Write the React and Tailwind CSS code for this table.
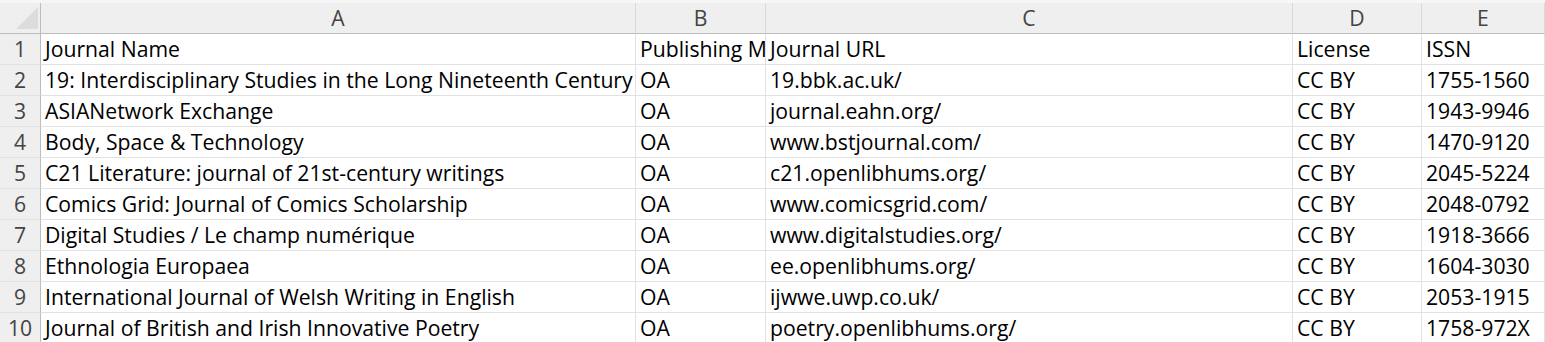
const COLS = ['A', 'B', 'C', 'D', 'E']

const ROWS = [
  ['Journal Name', 'Publishing Model', 'Journal URL', 'License', 'ISSN'],
  ['19: Interdisciplinary Studies in the Long Nineteenth Century', 'OA', '19.bbk.ac.uk/', 'CC BY', '1755-1560'],
  ['ASIANetwork Exchange', 'OA', 'journal.eahn.org/', 'CC BY', '1943-9946'],
  ['Body, Space & Technology', 'OA', 'www.bstjournal.com/', 'CC BY', '1470-9120'],
  ['C21 Literature: journal of 21st-century writings', 'OA', 'c21.openlibhums.org/', 'CC BY', '2045-5224'],
  ['Comics Grid: Journal of Comics Scholarship', 'OA', 'www.comicsgrid.com/', 'CC BY', '2048-0792'],
  ['Digital Studies / Le champ numérique', 'OA', 'www.digitalstudies.org/', 'CC BY', '1918-3666'],
  ['Ethnologia Europaea', 'OA', 'ee.openlibhums.org/', 'CC BY', '1604-3030'],
  ['International Journal of Welsh Writing in English', 'OA', 'ijwwe.uwp.co.uk/', 'CC BY', '2053-1915'],
  ['Journal of British and Irish Innovative Poetry', 'OA', 'poetry.openlibhums.org/', 'CC BY', '1758-972X'],
]

const GRID = 'grid grid-cols-[41px_595px_130px_527px_129px_1fr]'

export default function App() {
  return (
    <div className="h-[342px] w-[1545px] overflow-hidden bg-white font-['Open_Sans',sans-serif] text-[21.2px] leading-[30px] text-black">
      {/* column letters */}
      <div className={`${GRID} h-[34px] border-t-[3px] border-[#f6f6f6] bg-[#efefef]`}>
        <div className="relative border-b border-r border-b-[#bcbcbc] border-r-[#bcbcbc]">
          <div className="absolute left-[16px] top-[4px] h-[22px] w-[22px] bg-[#dcdcdc] [clip-path:polygon(100%_0,100%_100%,0_100%)]" />
        </div>
        {COLS.map((c) => (
          <div
            key={c}
            className="border-b border-r border-b-[#bcbcbc] border-r-[#dadada] text-center text-[#444]"
          >
            {c}
          </div>
        ))}
      </div>

      {ROWS.map((row, i) => (
        <div key={i} className={`${GRID} h-[31px]`}>
          <div className="border-b border-r border-b-[#e1e1e1] border-r-[#bcbcbc] bg-[#efefef] text-center text-[#444]">
            {i + 1}
          </div>
          {row.map((cell, j) => (
            <div
              key={j}
              className="overflow-hidden whitespace-nowrap border-b border-r border-[#e1e1e1] pl-[4px]"
            >
              {cell}
            </div>
          ))}
          <div className="border-b border-[#e1e1e1]" />
        </div>
      ))}
    </div>
  )
}
